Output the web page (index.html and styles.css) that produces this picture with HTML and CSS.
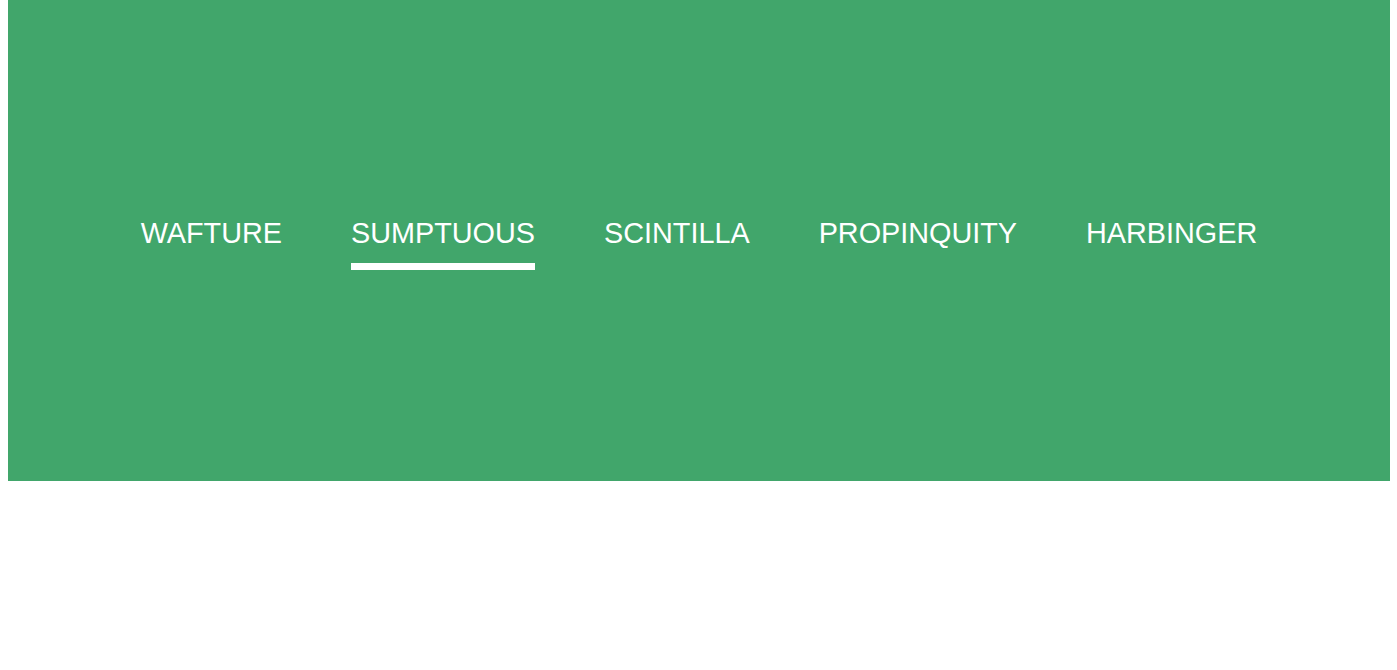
FILE: index.html
```html
<!DOCTYPE html>
<html>
<head>
    <meta charset="UTF-8">
    <meta name="viewport" content="width=device-width, initial-scale=1.0">
    <title>Words</title>
    <link rel="stylesheet" href="styles.css">
</head>
<body>
    <header class="banner">
        <nav class="menu">
            <a class="menu-item" href="#">WAFTURE</a>
            <a class="menu-item active" href="#">SUMPTUOUS</a>
            <a class="menu-item" href="#">SCINTILLA</a>
            <a class="menu-item" href="#">PROPINQUITY</a>
            <a class="menu-item" href="#">HARBINGER</a>
        </nav>
    </header>
</body>
</html>
```

FILE: styles.css
```css
body {
    margin: 0 7px 0 8px;
    font-family: 'Liberation Sans', Arial, sans-serif;
    background: #fff;
}

.banner {
    height: 481px;
    background: #41a66b;
    display: flex;
    align-items: center;
    justify-content: center;
}

.menu {
    display: flex;
    gap: 69px;
    padding-top: 5px;
}

.menu-item {
    display: block;
    color: #fff;
    text-decoration: none;
    font-size: 28.8px;
    padding-bottom: 13px;
    border-bottom: 7px solid transparent;
}

.menu-item.active {
    border-bottom-color: #fff;
}
```
